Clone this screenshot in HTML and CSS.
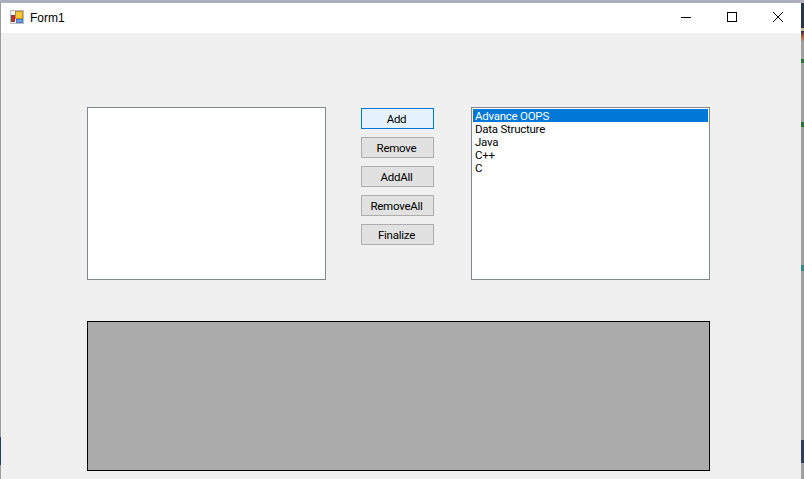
FILE: index.html
```html
<!DOCTYPE html>
<html lang="en">
<head>
	<meta charset="UTF-8">
	<title>Form1</title>
	<link rel="stylesheet" href="styles.css">
</head>
<body>
	<div class="edge left"></div>
	<div id="window">
		<div class="titlebar">
			<svg class="appicon" width="16" height="16" viewBox="0 0 16 16">
				<rect x="1.5" y="1.5" width="13" height="13" fill="#f6f6f6" stroke="#bcbcbc"/>
				<rect x="6.5" y="2.5" width="7" height="7" fill="#f7c737" stroke="#bd8f2c"/>
				<rect x="2.5" y="6.5" width="3" height="6" fill="#d1281f" stroke="#8f3a32"/>
				<rect x="7.5" y="10.5" width="6" height="3" fill="#6d9fe6" stroke="#4f7cc4"/>
			</svg>
			<span class="title">Form1</span>
			<div class="controls">
				<div class="ctrl">
					<svg width="12" height="12" viewBox="0 0 12 12"><path d="M1 6.5H11" stroke="#000" fill="none"/></svg>
				</div>
				<div class="ctrl">
					<svg width="12" height="12" viewBox="0 0 12 12"><rect x="1.5" y="1.5" width="9" height="9" stroke="#000" fill="none"/></svg>
				</div>
				<div class="ctrl">
					<svg width="12" height="12" viewBox="0 0 12 12"><path d="M1 1L11 11M11 1L1 11" stroke="#000" fill="none"/></svg>
				</div>
			</div>
		</div>
		<div id="client">
			<div class="top">
				<div class="listbox"></div>
				<div class="buttons">
					<div class="btn active">Add</div>
					<div class="btn">Remove</div>
					<div class="btn">AddAll</div>
					<div class="btn">RemoveAll</div>
					<div class="btn">Finalize</div>
				</div>
				<div class="listbox right">
					<div class="item selected">Advance OOPS</div>
					<div class="item">Data Structure</div>
					<div class="item">Java</div>
					<div class="item">C++</div>
					<div class="item">C</div>
				</div>
			</div>
			<div class="panel"></div>
		</div>
	</div>
	<div class="edge right-edge"></div>
</body>
</html>
```

FILE: styles.css
```css
*{
	padding: 0;
	margin: 0;
	box-sizing: border-box;
}
html,body{
	width: 100%;
	height: 100%;
	overflow: hidden;
}
body{
	background-color: #f0f0f0;
	display: grid;
	grid-template-columns: 1px 800px 3px;
	grid-template-rows: 3px 1fr;
	font-family: Roboto, "Liberation Sans", sans-serif;
	font-size: 11.5px;
	letter-spacing: -0.25px;
	color: #000;
}
body:before{
	content: "";
	grid-column: 1 / 4;
	background-color: #aeaec0;
}
.edge{
	height: 100%;
}
.left{
	background: linear-gradient(#9c9c9c 0, #9c9c9c 434px, #2f3d5c 434px, #2f3d5c 462px, #9c9c9c 462px);
}
.right-edge{
	background: linear-gradient(#26344f 0, #26344f 25px, #c9b98a 25px, #c9b98a 28px, #26344f 28px, #c2622a 34px, #a0a0a0 39px, #a0a0a0 56px, #1e7a2e 56px, #1e7a2e 60px, #a0a0a0 60px, #a0a0a0 119px, #1e7a2e 119px, #1e7a2e 124px, #a0a0a0 124px, #a0a0a0 262px, #2a8a8a 262px, #2a8a8a 268px, #a0a0a0 268px, #a0a0a0 437px, #2f3d5c 437px, #2f3d5c 460px, #a0a0a0 460px);
}
#window{
	height: 100%;
	display: flex;
	flex-direction: column;
	background-color: #f0f0f0;
}
.titlebar{
	height: 30px;
	background-color: #fff;
	display: flex;
	align-items: center;
	padding-left: 8px;
}
.appicon{
	margin-right: 5px;
	margin-bottom: 2px;
}
.title{
	font-family: "Liberation Sans", sans-serif;
	font-size: 12px;
	letter-spacing: 0;
}
.controls{
	margin-left: auto;
	display: flex;
}
.ctrl{
	width: 46px;
	height: 30px;
	padding-bottom: 2px;
	display: flex;
	justify-content: center;
	align-items: center;
}
#client{
	flex: 1;
	padding: 74px 91px 0 86px;
}
.top{
	display: flex;
	align-items: flex-start;
}
.listbox{
	width: 239px;
	height: 173px;
	background-color: #fff;
	border: 1px solid #828790;
}
.right{
	padding: 1px;
}
.buttons{
	width: 73px;
	margin: 1px 37px 0 35px;
	display: flex;
	flex-direction: column;
	gap: 8px;
}
.btn{
	height: 21px;
	padding-right: 2px;
	background-color: #e1e1e1;
	border: 1px solid #adadad;
	display: flex;
	justify-content: center;
	align-items: center;
}
.active{
	background-color: #e5f1fb;
	border-color: #0078d7;
}
.item{
	height: 13px;
	line-height: 15px;
	padding-left: 2px;
}
.selected{
	background-color: #0078d7;
	color: #fff;
}
.panel{
	margin-top: 41px;
	width: 623px;
	height: 150px;
	background-color: #ababab;
	border: 1px solid #000;
}
```
